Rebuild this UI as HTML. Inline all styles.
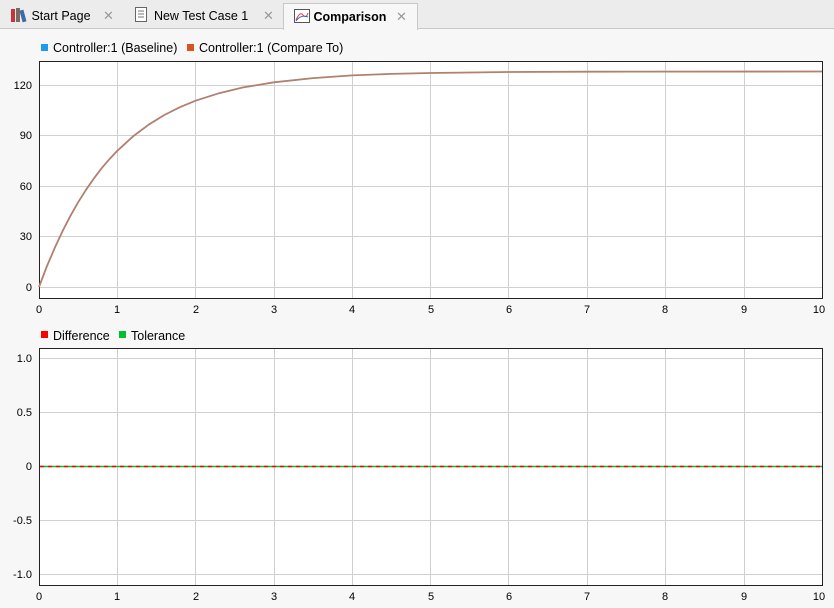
<!DOCTYPE html>
<html><head><style>
body{margin:0;width:834px;height:608px;background:#f7f7f7;font-family:"Liberation Sans",Arial,sans-serif;font-size:12px;overflow:hidden;position:relative}
.tabs{position:absolute;left:0;top:0;width:834px;height:28px;background:#ececec;border-bottom:1px solid #c8c8c8}
.tab{position:absolute;top:3px;height:25px;line-height:26px;font-size:12.5px;color:#000}
.x{position:absolute;top:0;color:#999;font-size:13px}
</style></head><body>
<div class="tabs">
 <div class="tab" style="left:10px"><svg width="18" height="16" style="vertical-align:-3px"><rect x="1" y="2" width="4" height="13" fill="#c33"/><rect x="6" y="1" width="4" height="14" fill="#7a6a66"/><rect x="11" y="3" width="4" height="12" fill="#3b6aa8" transform="rotate(-15 13 9)"/></svg> Start Page<span class="x" style="left:93px">✕</span></div>
 <div class="tab" style="left:135px"><svg width="12" height="16" style="vertical-align:-3px"><rect x="0.5" y="0.5" width="11" height="14" fill="#fff" stroke="#666"/><path d="M3 4h6M3 7h6M3 10h6" stroke="#777"/></svg> &nbsp;New Test Case 1<span class="x" style="left:128px">✕</span></div>
 <div class="tab" style="left:283px;top:3px;width:133px;background:#f7f7f7;border:1px solid #c8c8c8;border-bottom:none;height:26px"><svg width="16" height="14" style="vertical-align:-2px;margin-left:10px"><rect x="0.5" y="0.5" width="15" height="13" fill="#fff" stroke="#555"/><path d="M2 11 Q6 2 9 6 T14 4" stroke="#d33" fill="none"/><path d="M2 12 Q7 5 14 8" stroke="#36c" fill="none"/></svg> <b>Comparison</b><span class="x" style="left:112px">✕</span></div>
</div>
<svg width="834" height="608" style="position:absolute;left:0;top:0" font-family="Liberation Sans,Arial,sans-serif" font-size="11">
<rect x="41" y="44" width="7" height="7" fill="#1e9bf0"/><text x="53" y="52" font-size="12.5">Controller:1 (Baseline)</text>
<rect x="187" y="44" width="7" height="7" fill="#d8531f"/><text x="199" y="52" font-size="12.5">Controller:1 (Compare To)</text>
<rect x="39.5" y="61.5" width="783" height="237" fill="#fff"/>
<g stroke="#d0d0d0">
<path d="M117.5 62V298M195.5 62V298M274.5 62V298M352.5 62V298M430.5 62V298M508.5 62V298M587.5 62V298M665.5 62V298M744.5 62V298"/>
<path d="M40 85.5H822M40 135.5H822M40 186.5H822M40 236.5H822M40 287.5H822"/>
</g>
<rect x="39.5" y="61.5" width="783" height="237" fill="none" stroke="#222"/>
<g text-anchor="end"><text x="32" y="89">120</text><text x="32" y="139">90</text><text x="32" y="190">60</text><text x="32" y="240">30</text><text x="32" y="291">0</text></g>
<g text-anchor="middle"><text x="39" y="313">0</text><text x="117" y="313">1</text><text x="196" y="313">2</text><text x="274" y="313">3</text><text x="352" y="313">4</text><text x="431" y="313">5</text><text x="509" y="313">6</text><text x="587" y="313">7</text><text x="665" y="313">8</text><text x="744" y="313">9</text><text x="819" y="313">10</text></g>
<polyline points="39,287 46.8,266.5 54.7,248 62.5,231.2 70.3,216.1 78.2,202.2 86,189.8 93.8,178.6 101.6,168.3 109.5,159.1 117.3,150.8 133,136.4 148.6,124.7 164.3,115 179.9,107.2 195.6,100.7 219.1,93.2 242.6,87.5 273.9,82.3 313,78.1 352.2,75.4 391.4,73.9 430.5,73 508.8,72 587,71.7 822,71.5" fill="none" stroke="#b08070" stroke-width="1.8" stroke-linejoin="round"/>
<rect x="41" y="331" width="7" height="7" fill="#f00"/><text x="53" y="340" font-size="12.5">Difference</text>
<rect x="119" y="331" width="7" height="7" fill="#00c030"/><text x="131" y="340" font-size="12.5">Tolerance</text>
<rect x="39.5" y="348.5" width="783" height="237" fill="#fff"/>
<g stroke="#d0d0d0">
<path d="M117.5 349V585M195.5 349V585M274.5 349V585M352.5 349V585M430.5 349V585M508.5 349V585M587.5 349V585M665.5 349V585M744.5 349V585"/>
<path d="M40 358.5H822M40 412.5H822M40 520.5H822M40 574.5H822"/>
</g>
<path d="M40 466.5H822" stroke="#00c030" stroke-width="1.5"/>
<path d="M40 466.5H822" stroke="#f00" stroke-dasharray="4 4" stroke-width="1.5"/>
<rect x="39.5" y="348.5" width="783" height="237" fill="none" stroke="#222"/>
<g text-anchor="end"><text x="32" y="362">1.0</text><text x="32" y="416">0.5</text><text x="32" y="470">0</text><text x="32" y="524">-0.5</text><text x="32" y="578">-1.0</text></g>
<g text-anchor="middle"><text x="39" y="600">0</text><text x="117" y="600">1</text><text x="196" y="600">2</text><text x="274" y="600">3</text><text x="352" y="600">4</text><text x="431" y="600">5</text><text x="509" y="600">6</text><text x="587" y="600">7</text><text x="665" y="600">8</text><text x="744" y="600">9</text><text x="819" y="600">10</text></g>
</svg>
</body></html>
